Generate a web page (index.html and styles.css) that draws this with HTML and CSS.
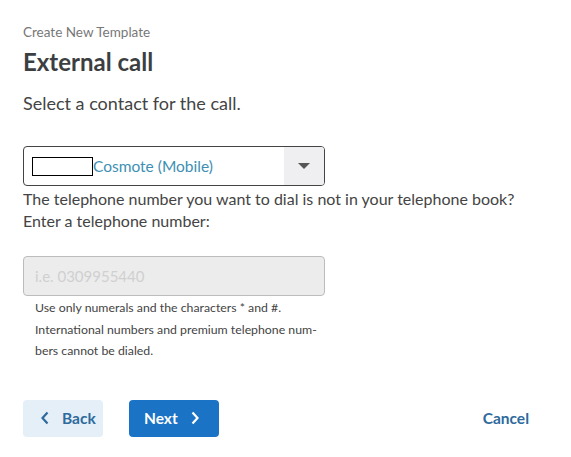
FILE: index.html
```html
<!DOCTYPE html>
<html lang="en">
<head>
    <meta charset="UTF-8">
    <meta name="viewport" content="width=device-width, initial-scale=1.0">
    <title>External call</title>
    <link rel="stylesheet" href="styles.css">
</head>
<body>

<div class="page">
    <div class="breadcrumb">Create New Template</div>
    <h1>External call</h1>
    <p class="intro">Select a contact for the call.</p>

    <div class="select">
        <div class="select-value">
            <span class="contact-box"></span>
            <span class="contact-name">Cosmote (Mobile)</span>
        </div>
        <div class="select-arrow"><span class="triangle"></span></div>
    </div>

    <p class="hint">The telephone number you want to dial is not in your telephone book?<br>Enter a telephone number:</p>

    <input class="phone" type="text" placeholder="i.e. 0309955440" disabled>

    <p class="help">Use only numerals and the characters * and #.<br>International numbers and premium telephone num-<br>bers cannot be dialed.</p>

    <div class="actions">
        <button class="btn btn-back" type="button">
            <svg width="10" height="14" viewBox="0 0 10 14"><path d="M7.5 1.5 L2.5 7 L7.5 12.5" fill="none" stroke="currentColor" stroke-width="2.2"/></svg>
            Back
        </button>
        <button class="btn btn-next" type="button">
            Next
            <svg width="10" height="14" viewBox="0 0 10 14"><path d="M2.5 1.5 L7.5 7 L2.5 12.5" fill="none" stroke="currentColor" stroke-width="2.2"/></svg>
        </button>
        <button class="btn btn-cancel" type="button">Cancel</button>
    </div>
</div>

</body>
</html>
```

FILE: styles.css
```css
body {
    font-family: Lato, "Noto Sans", sans-serif;
    background-color: #fff;
    margin: 0;
    color: #444;
}

.page {
    padding: 24px 42px 0 23px;
}

.breadcrumb {
    font-size: 13.5px;
    color: #777;
    line-height: 16px;
}

h1 {
    font-size: 24px;
    font-weight: bold;
    color: #3c3f42;
    margin: 7px 0 0;
    line-height: 30px;
}

.intro {
    font-size: 18px;
    margin: 15px 0 0;
    line-height: 22px;
}

.select {
    display: flex;
    width: 300px;
    height: 38px;
    margin-top: 32px;
    border: 1px solid #444;
    border-radius: 4px;
    overflow: hidden;
}

.select-value {
    flex: 1;
    display: flex;
    align-items: center;
    padding-left: 8px;
}

.contact-box {
    width: 59px;
    height: 17px;
    border: 1px solid #000;
}

.contact-name {
    color: #3e8fb3;
    font-size: 15.5px;
}

.select-arrow {
    width: 40px;
    background-color: #efeff1;
    display: flex;
    align-items: center;
    justify-content: center;
}

.triangle {
    width: 0;
    height: 0;
    border-left: 6px solid transparent;
    border-right: 6px solid transparent;
    border-top: 6px solid #555;
}

.hint {
    font-size: 16px;
    line-height: 22px;
    margin: 2px 0 0;
}

.phone {
    display: block;
    box-sizing: border-box;
    width: 302px;
    height: 40px;
    margin-top: 24px;
    padding: 0 11px;
    font-family: inherit;
    font-size: 15px;
    background-color: #ececec;
    border: 1px solid #bcbcbc;
    border-radius: 4px;
}

.phone::placeholder {
    color: #d0d0d0;
}

.help {
    font-size: 12.3px;
    line-height: 21.5px;
    color: #444;
    margin: 0;
    padding: 1px 0 0 12px;
}

.actions {
    display: flex;
    align-items: center;
    margin-top: 38px;
}

.btn {
    display: flex;
    align-items: center;
    gap: 12px;
    height: 37px;
    border: none;
    border-radius: 4px;
    font-family: inherit;
    font-size: 15.5px;
    font-weight: bold;
    cursor: pointer;
}

.btn-back {
    width: 80px;
    padding: 0 0 0 17px;
    background-color: #e5eff8;
    color: #2e6a9c;
}

.btn-next {
    width: 90px;
    margin-left: 26px;
    padding: 0 0 0 15px;
    background-color: #1a73c5;
    color: #fff;
}

.btn-cancel {
    margin-left: auto;
    background: none;
    color: #2e6a9c;
    padding: 0;
}
```
